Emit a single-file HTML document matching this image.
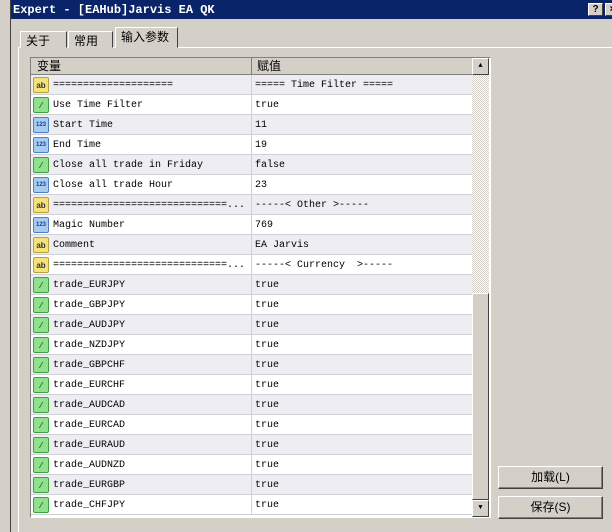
<!DOCTYPE html>
<html><head><meta charset="utf-8"><style>
*{margin:0;padding:0;box-sizing:border-box}
body{width:612px;height:532px;overflow:hidden;background:#d4d0c8;position:relative;font-family:"Liberation Mono",monospace;font-size:10px}
.abs{position:absolute}
#left{left:0;top:0;width:11px;height:532px;background:#d4d0c8;border-right:1px solid #404040}
#title{left:11px;top:0;width:601px;height:19px;background:#0a246a;color:#fff;font-weight:bold;font-size:12px;line-height:20px;padding-left:2px;font-family:"Liberation Mono",monospace}
.tb{top:3px;width:15px;height:13px;background:#d4d0c8;border:1px solid;border-color:#fff #404040 #404040 #fff;color:#000;font:bold 10px "Liberation Sans",sans-serif;text-align:center;line-height:11px}
.tab{top:29px;height:19px;border:1px solid;border-color:#fff #404040 transparent #fff;font:12px "Liberation Sans","Noto Sans CJK SC",sans-serif;line-height:19px;padding-left:5px;background:#d4d0c8}
#panel{left:18px;top:47px;width:594px;height:485px;border-top:1px solid #fff;border-left:1px solid #fff}
#list{left:30px;top:57px;width:461px;height:461px;border:1px solid;border-color:#808080 #fff #fff #808080;background:#fff;overflow:hidden}
#hdr{left:0;top:0;width:441px;height:17px;background:#d4d0c8;font:12px "Liberation Sans","Noto Sans CJK SC",sans-serif;line-height:17px;border-bottom:1px solid #808080}
.row{position:absolute;left:0;width:441px;height:20px;border-bottom:1px solid #d0d0d8;line-height:22px;white-space:pre}
.row .n{position:absolute;left:22px}
.row .v{position:absolute;left:224px}
.row .d{position:absolute;left:220px;top:0;width:1px;height:20px;background:#d0d0d8}
.ic{position:absolute;left:2px;top:2px;width:16px;height:16px;border-radius:2px;font:bold 8px "Liberation Sans",sans-serif;text-align:center;line-height:15px}
.ab{background:#f6e27a;border:1px solid #b8a040;color:#333}
.nu{background:#a8ccf0;border:1px solid #5080c0;color:#1040a0;font-size:6px}
.bo{background:#8fe08f;border:1px solid #40a040;color:#106010}
#sb{left:441px;top:0;width:17px;height:459px;background:repeating-conic-gradient(#fff 0 25%,#d4d0c8 0 50%) 0 0/2px 2px}
.sbtn{position:absolute;left:0;width:17px;height:17px;background:#d4d0c8;border:1px solid;border-color:#fff #404040 #404040 #fff;font-size:7px;text-align:center;line-height:14px}
.btn{width:105px;height:23px;background:#d4d0c8;border:1px solid;border-color:#fff #404040 #404040 #fff;box-shadow:inset -1px -1px #808080;font:12px "Liberation Sans","Noto Sans CJK SC",sans-serif;text-align:center;line-height:21px}
</style></head><body>
<div class="abs" id="left"></div>
<div class="abs" id="title">Expert - [EAHub]Jarvis EA QK</div>
<div class="abs tb" style="left:588px">?</div>
<div class="abs tb" style="left:605px">×</div>
<div class="abs" id="panel"></div>
<div class="abs tab" style="left:20px;width:47px;top:31px;height:17px">关于</div>
<div class="abs tab" style="left:68px;width:45px;top:31px;height:17px">常用</div>
<div class="abs tab" style="left:115px;width:63px;top:27px;height:21px;border-bottom:1px solid #d4d0c8">输入参数</div>
<div class="abs" id="list">
<div class="abs" id="hdr"><span style="position:absolute;left:6px">变量</span><span style="position:absolute;left:220px;top:0;height:17px;border-left:1px solid #808080;padding-left:5px">赋值</span></div>
<div id="rows"></div>
<div class="abs" id="sb">
<div class="sbtn" style="top:0">▲</div>
<div class="sbtn" style="top:235px;height:207px"></div>
<div class="sbtn" style="top:442px">▼</div>
</div>
</div>
<div class="abs btn" style="left:498px;top:466px">加载(L)</div>
<div class="abs btn" style="left:498px;top:496px">保存(S)</div>
<script>
var d=[["ab","====================","===== Time Filter ====="],["bo","Use Time Filter","true"],["nu","Start Time","11"],["nu","End Time","19"],["bo","Close all trade in Friday","false"],["nu","Close all trade Hour","23"],["ab","=============================...","-----< Other >-----"],["nu","Magic Number","769"],["ab","Comment","EA Jarvis"],["ab","=============================...","-----< Currency  >-----"]];
["EURJPY","GBPJPY","AUDJPY","NZDJPY","GBPCHF","EURCHF","AUDCAD","EURCAD","EURAUD","AUDNZD","EURGBP","CHFJPY"].forEach(function(c){d.push(["bo","trade_"+c,"true"])});
var h="";d.forEach(function(r,i){var t={ab:"ab",nu:"123",bo:"⁄"}[r[0]];h+='<div class="row" style="top:'+(17+i*20)+'px;background:'+(i%2?'#fff':'#eeedf2')+'"><div class="ic '+r[0]+'">'+t+'</div><span class="n">'+r[1]+'</span><div class="d"></div><span class="v">'+r[2]+'</span></div>'});
document.getElementById("rows").innerHTML=h;
</script>
</body></html>
